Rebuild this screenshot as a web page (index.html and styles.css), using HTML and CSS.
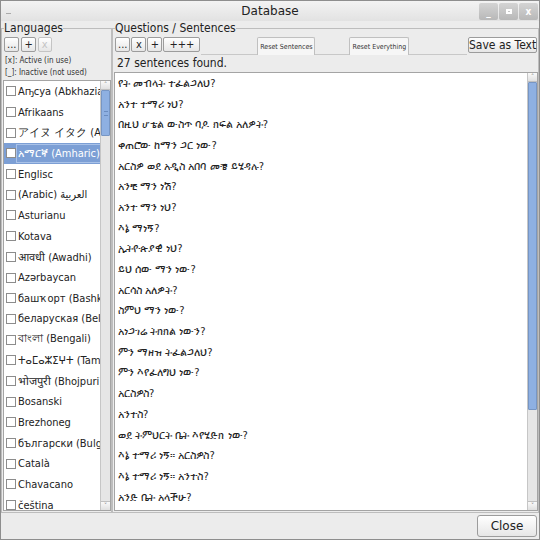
FILE: index.html
```html
<!DOCTYPE html>
<html lang="en">
<head>
  <meta charset="UTF-8">
  <title>Database</title>
  <link rel="stylesheet" href="styles.css">
</head>
<body>

  <div class="window">
    <div class="titlebar">
      <div class="app-icon"></div>
      <div class="title">Database</div>
      <div class="win-buttons">
        <div class="win-btn">_</div>
        <div class="win-btn"><span class="max-box"></span></div>
        <div class="win-btn">x</div>
      </div>
    </div>

    <div class="main">
      <fieldset class="panel lang-panel">
        <legend>Languages</legend>
        <div class="toolbar">
          <button class="btn">...</button>
          <button class="btn">+</button>
          <button class="btn" disabled>x</button>
        </div>
        <div class="key">[x]: Active (in use)</div>
        <div class="key">[_]: Inactive (not used)</div>

        <div class="listbox">
          <div class="rows" id="langRows"></div>
          <div class="scrollbar">
            <div class="arrow">&#708;</div>
            <div class="track">
              <div class="thumb lang-thumb"><span class="grip"></span></div>
            </div>
            <div class="arrow">&#709;</div>
          </div>
        </div>
      </fieldset>

      <fieldset class="panel sent-panel">
        <legend>Questions / Sentences</legend>
        <div class="toolbar">
          <button class="btn">...</button>
          <button class="btn">x</button>
          <button class="btn">+</button>
          <button class="btn wide">+++</button>
          <div class="tab-strip">
            <button class="tab first-tab">Reset Sentences</button>
            <button class="tab second-tab">Reset Everything</button>
          </div>
          <button class="btn save">Save as Text</button>
        </div>
        <div class="count">27 sentences found.</div>

        <div class="listbox">
          <div class="rows" id="sentRows"></div>
          <div class="scrollbar">
            <div class="arrow">&#708;</div>
            <div class="track">
              <div class="thumb sent-thumb"></div>
            </div>
            <div class="arrow">&#709;</div>
          </div>
        </div>
      </fieldset>
    </div>

    <div class="footer">
      <button class="btn close">Close</button>
    </div>
  </div>

  <script>
    const languages = [
      "Аҧсуа (Abkhazian)", "Afrikaans", "アイヌ イタク (Ainu)", "አማርኛ (Amharic)",
      "Englisc", "(Arabic) العربية", "Asturianu", "Kotava", "आवधी (Awadhi)",
      "Azərbaycan", "башҡорт (Bashkir)", "беларуская (Belarusian)", "বাংলা (Bengali)",
      "ⵜⴰⵎⴰⵣⵉⵖⵜ (Tamazight)", "भोजपुरी (Bhojpuri)", "Bosanski", "Brezhoneg",
      "български (Bulgarian)", "Català", "Chavacano", "čeština"
    ];

    const sentences = [
      "የት መብላት ተፈልጋለህ?", "አንተ ተማሪ ነህ?", "በዚህ ሆቴል ውስጥ ባዶ ክፍል አለዎት?",
      "ቀጠሮው ከማን ጋር ነው?", "አርስዎ ወደ አዲስ አበባ መቼ ይሄዳሉ?", "አንቺ ማን ነሽ?",
      "አንተ ማን ነህ?", "እኔ ማነኝ?", "ኢትዮጵያዊ ነህ?", "ይህ ሰው ማን ነው?",
      "አርሳስ አለዎት?", "ስምህ ማን ነው?", "አነጋገሬ ትክክል ነውን?", "ምን ማዘዝ ትፈልጋለህ?",
      "ምን እየፈለግህ ነው?", "አርስዎስ?", "አንተስ?", "ወደ ትምህርት ቤት እየሄድክ ነው?",
      "እኔ ተማሪ ነኝ። አርስዎስ?", "እኔ ተማሪ ነኝ። አንተስ?", "አንድ ቤት አላችሁ?"
    ];

    const langRows = document.getElementById('langRows');
    languages.forEach(function(name, i) {
      const row = document.createElement('div');
      row.className = 'row' + (i === 3 ? ' selected' : '');
      const box = document.createElement('span');
      box.className = 'check';
      const label = document.createElement('span');
      label.className = 'label';
      label.textContent = name;
      row.appendChild(box);
      row.appendChild(label);
      langRows.appendChild(row);
    });

    const sentRows = document.getElementById('sentRows');
    sentences.forEach(function(text) {
      const row = document.createElement('div');
      row.className = 'row';
      row.textContent = text;
      sentRows.appendChild(row);
    });
  </script>

</body>
</html>
```

FILE: styles.css
```css
:root {
  --bg-color: #ececec;
  --line-color: #bdbdbd;
  --box-border: #a4a4a4;
  --select-color: #7c9fd5;
  --thumb-color: #8eb0e2;
  --font-color: #222;
}

* { box-sizing: border-box; }

body {
  margin: 0;
  font-family: 'DejaVu Sans Condensed', 'DejaVu Sans', sans-serif;
  font-size: 11px;
  color: var(--font-color);
}

.window {
  width: 540px;
  height: 540px;
  border: 1px solid #8e8e8e;
  background: var(--bg-color);
  display: flex;
  flex-direction: column;
}

.titlebar {
  height: 20px;
  display: flex;
  align-items: center;
  background: linear-gradient(#f3f3f3, #e2e2e2);
}

.app-icon {
  width: 5px;
  height: 5px;
  margin-left: 5px;
  border-bottom: 1px solid #aaa;
}

.title {
  flex: 1;
  text-align: center;
  font-family: 'DejaVu Sans', sans-serif;
  font-size: 12px;
  padding-left: 50px;
}

.win-buttons {
  display: flex;
  gap: 1px;
  margin-right: 1px;
}

.win-btn {
  width: 19px;
  height: 17px;
  border-radius: 2px;
  background: linear-gradient(#d4d4d4, #b8b8b8);
  color: white;
  font-size: 10px;
  font-weight: bold;
  display: flex;
  align-items: center;
  justify-content: center;
}

.max-box {
  width: 6px;
  height: 5px;
  border: 2px solid white;
}

.main {
  flex: 1;
  display: flex;
  min-height: 0;
}

.panel {
  margin: 0;
  padding: 0 0 1px 0;
  border: 1px solid var(--line-color);
  display: flex;
  flex-direction: column;
  min-width: 0;
}

.panel legend {
  padding: 0;
  margin-left: 1px;
  font-size: 12px;
  line-height: 14px;
}

.lang-panel {
  width: 111px;
  padding-left: 1px;
}

.sent-panel {
  flex: 1;
  padding-left: 1px;
}

.toolbar {
  display: flex;
  align-items: flex-start;
  gap: 2px;
  margin: 2px 0 0 1px;
  height: 18px;
}

.btn {
  font-family: 'DejaVu Sans Condensed', 'DejaVu Sans', sans-serif;
  font-size: 11px;
  line-height: 13px;
  height: 15px;
  min-width: 14px;
  padding: 0 2px;
  white-space: nowrap;
  border: 1px solid #9c9c9c;
  border-radius: 2px;
  background: linear-gradient(#ffffff, #e6e6e6);
  color: #222;
}

.btn:disabled {
  color: #c4c4c4;
  border-color: #c4c4c4;
  width: 12px;
}

.sent-panel .toolbar {
  gap: 1px;
}

.sent-panel .toolbar .btn {
  min-width: 15px;
}

.btn.wide {
  width: 37px;
}

.tab-strip {
  flex: 1;
  height: 18px;
  display: flex;
  align-items: flex-start;
  border-bottom: 1px solid #c8c8c8;
}

.tab {
  height: 18px;
  font-family: 'DejaVu Sans Condensed', 'DejaVu Sans', sans-serif;
  font-size: 7px;
  white-space: nowrap;
  padding: 0;
  border: 1px solid #c0c0c0;
  border-bottom: none;
  border-radius: 2px 2px 0 0;
  background: #f6f6f6;
  color: #333;
}

.first-tab {
  margin-left: 56px;
  width: 58px;
}

.second-tab {
  margin-left: 34px;
  width: 60px;
}

.btn.save {
  width: 69px;
  height: 16px;
  font-size: 12px;
  padding: 0;
  margin-right: 1px;
}

.key {
  font-size: 8px;
  line-height: 12px;
  margin-left: 2px;
  color: #333;
}

.count {
  font-size: 12px;
  line-height: 15px;
  margin: 1px 0 0 3px;
}

.listbox {
  flex: 1;
  min-height: 0;
  margin-top: 1px;
  display: flex;
  background: white;
  border: 1px solid var(--box-border);
  overflow: hidden;
}

.rows {
  flex: 1;
  min-width: 0;
  overflow: hidden;
}

.row {
  height: 20.7px;
  display: flex;
  align-items: center;
  white-space: nowrap;
  font-size: 11px;
  padding-left: 0;
}

.check {
  flex: none;
  width: 10px;
  height: 10px;
  border: 1px solid #8c8c8c;
  background: white;
  margin: 0 2px 0 2px;
}

.row.selected {
  background: var(--select-color);
  color: white;
}

.row.selected .label {
  border: 1px solid #a9c2e8;
  padding: 2px 1px;
  margin-left: -2px;
}

.sent-panel .row {
  padding-left: 3px;
}

.scrollbar {
  width: 10px;
  flex: none;
  display: flex;
  flex-direction: column;
  background: #ececec;
  border-left: 1px solid #c6c6c6;
}

.arrow {
  height: 9px;
  font-size: 7px;
  line-height: 9px;
  text-align: center;
  color: #777;
  background: linear-gradient(#fafafa, #e0e0e0);
  border-bottom: 1px solid #c0c0c0;
}

.arrow:last-child {
  border-bottom: none;
  border-top: 1px solid #c0c0c0;
}

.track {
  flex: 1;
  background: #e6e6e6;
}

.thumb {
  background: var(--thumb-color);
  border: 1px solid #7796c4;
  border-radius: 1px;
  display: flex;
  align-items: center;
  justify-content: center;
}

.lang-thumb {
  height: 46px;
}

.sent-thumb {
  height: 328px;
}

.grip {
  width: 4px;
  height: 5px;
  border-top: 1px solid #6a8cc0;
  border-bottom: 1px solid #6a8cc0;
}

.footer {
  height: 26px;
  display: flex;
  justify-content: flex-end;
  align-items: center;
  padding-right: 2px;
}

.btn.close {
  width: 60px;
  height: 22px;
  font-family: 'DejaVu Sans', sans-serif;
  font-size: 12px;
  border-radius: 3px;
}
```
